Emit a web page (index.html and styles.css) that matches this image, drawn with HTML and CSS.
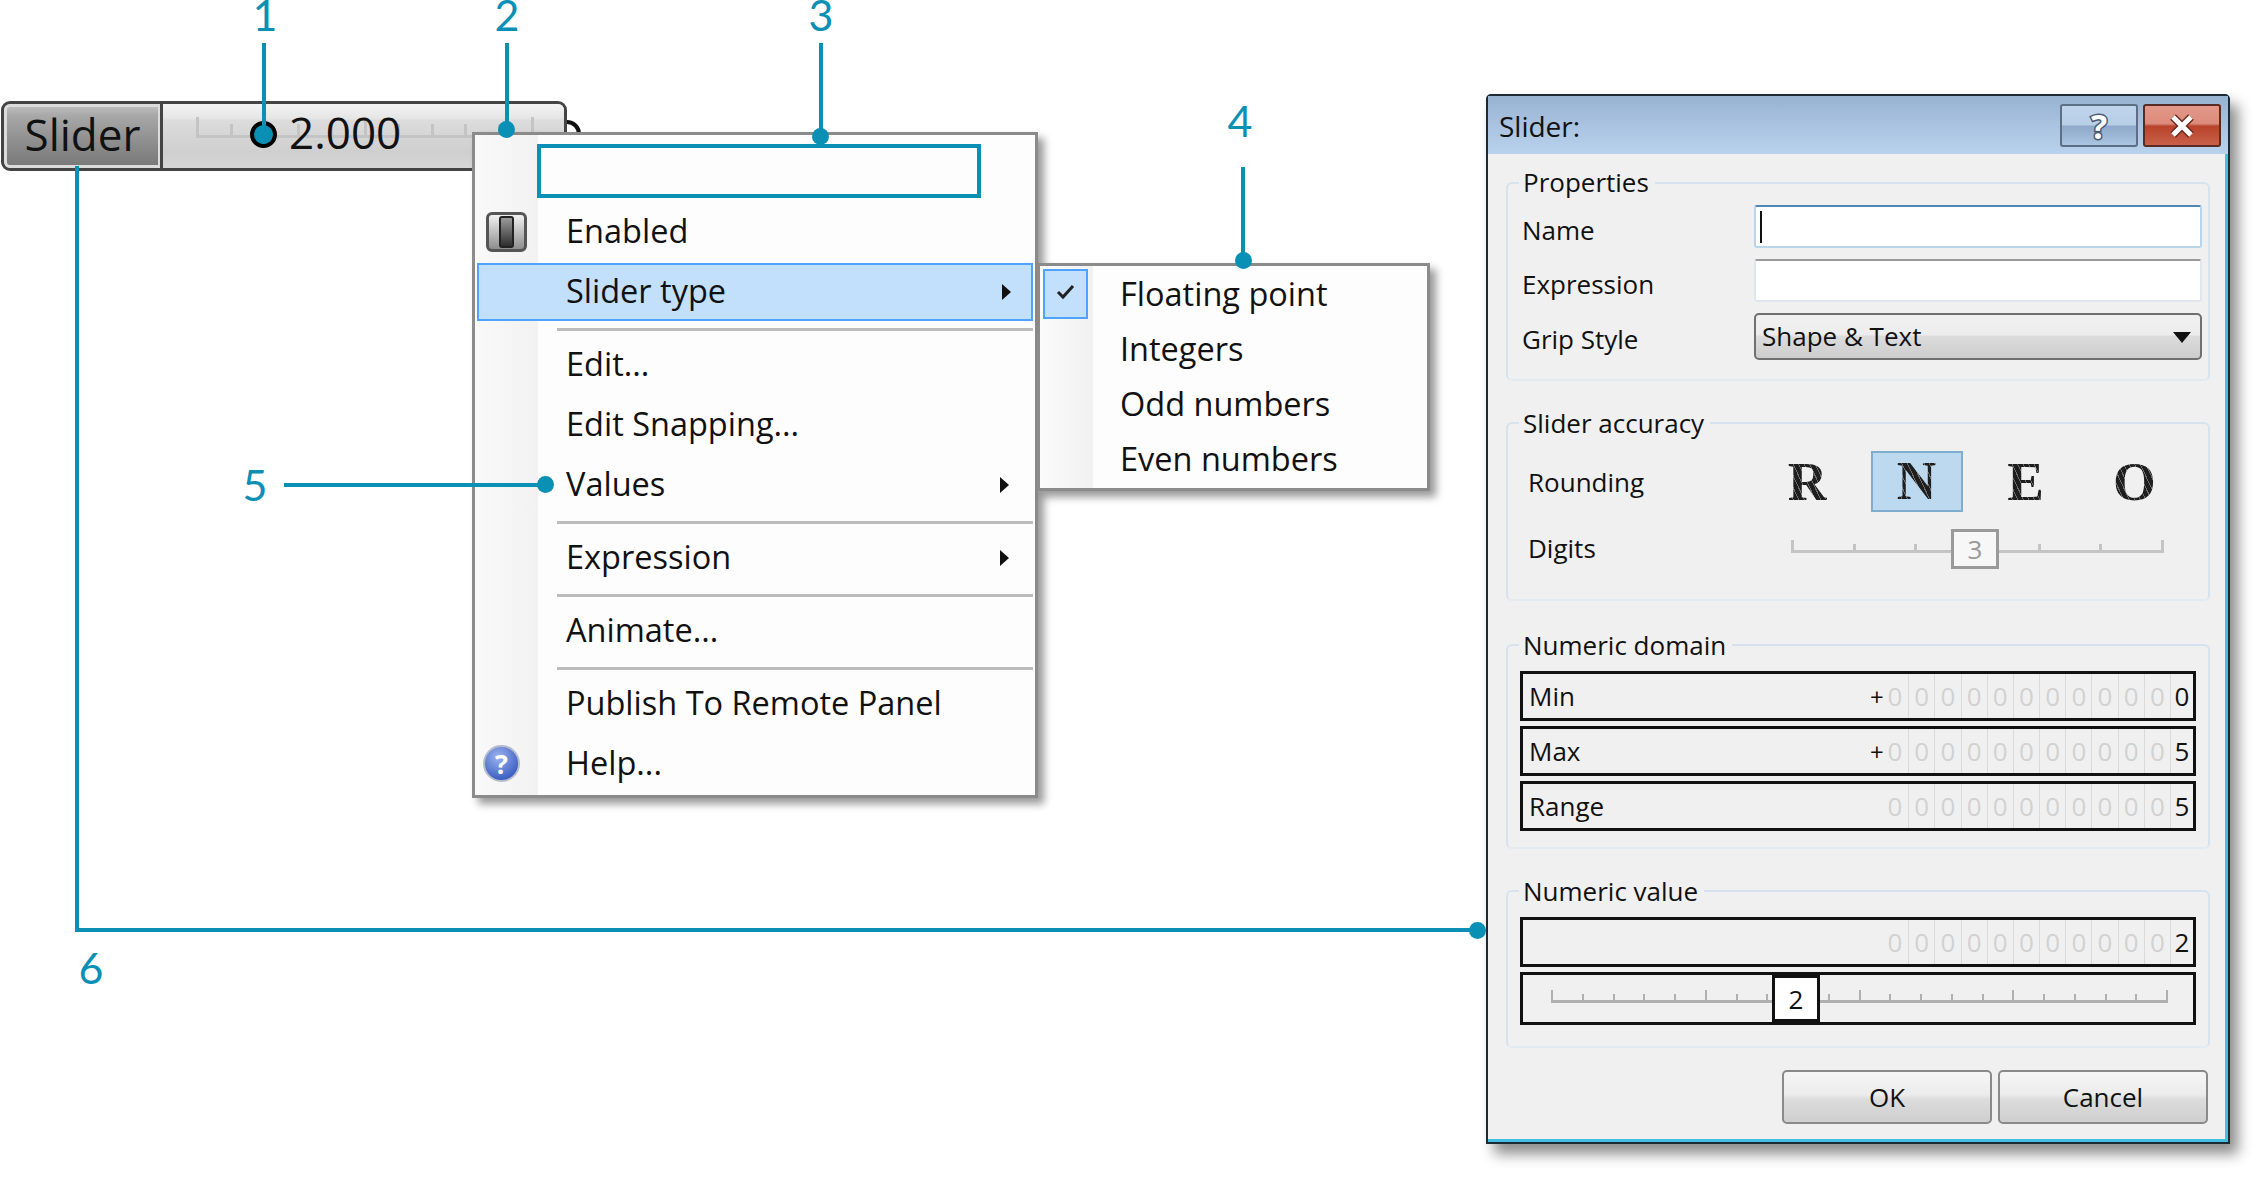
FILE: index.html
```html
<!DOCTYPE html>
<html lang="en">
<head>
    <meta charset="UTF-8">
    <title>Slider</title>
    <link rel="stylesheet" href="styles.css">
</head>
<body>
<div class="canvas">

    <!-- slider component -->
    <div class="wire-ring"></div>
    <div class="slider-node">
        <div class="node-label">Slider</div>
        <div class="node-body">
            <div class="ticks node-ticks">
                <i class="big"></i><i></i><i></i><i></i><i></i><i class="big"></i><i></i><i></i><i></i><i></i><i class="big"></i>
            </div>
            <div class="node-grip"></div>
            <div class="node-value">2.000</div>
        </div>
    </div>

    <!-- context menu -->
    <div class="menu">
        <div class="menu-blank"></div>
        <div class="menu-item">
            <span class="enabled-icon"><span></span></span>
            Enabled
        </div>
        <div class="menu-item active">Slider type<span class="arrow"></span></div>
        <div class="menu-sep"></div>
        <div class="menu-item">Edit...</div>
        <div class="menu-item">Edit Snapping...</div>
        <div class="menu-item">Values<span class="arrow"></span></div>
        <div class="menu-sep"></div>
        <div class="menu-item">Expression<span class="arrow"></span></div>
        <div class="menu-sep"></div>
        <div class="menu-item">Animate...</div>
        <div class="menu-sep"></div>
        <div class="menu-item">Publish To Remote Panel</div>
        <div class="menu-item"><span class="help-icon">?</span>Help...</div>
    </div>

    <div class="submenu">
        <div class="sub-item">
            <span class="sub-check">
                <svg width="20" height="16" viewBox="0 0 20 16"><path d="M2 8 L7 13 L17 2" fill="none" stroke="#222" stroke-width="3"/></svg>
            </span>
            Floating point
        </div>
        <div class="sub-item"><span class="sub-check off"></span>Integers</div>
        <div class="sub-item"><span class="sub-check off"></span>Odd numbers</div>
        <div class="sub-item"><span class="sub-check off"></span>Even numbers</div>
    </div>

    <!-- dialog -->
    <div class="dialog">
        <div class="titlebar">
            <span class="title">Slider:</span>
            <span class="title-btn btn-help">?</span>
            <span class="title-btn btn-close">
                <svg width="30" height="26" viewBox="0 0 30 26"><path d="M6 4 L24 22 M24 4 L6 22" stroke="#6b2a1e" stroke-width="8"/><path d="M6 4 L24 22 M24 4 L6 22" stroke="#fff" stroke-width="5"/></svg>
            </span>
        </div>
        <div class="dialog-body">

            <div class="group group-props">
                <span class="legend">Properties</span>
                <div class="prop-grid">
                    <span class="prop-label">Name</span>
                    <div class="input focused"><span class="caret"></span></div>
                    <span class="prop-label">Expression</span>
                    <div class="input"></div>
                    <span class="prop-label grip">Grip Style</span>
                    <div class="select">Shape &amp; Text<span class="select-arrow"></span></div>
                </div>
            </div>

            <div class="group group-accuracy">
                <span class="legend">Slider accuracy</span>
                <div class="acc-row rounding">
                    <span class="acc-label">Rounding</span>
                    <div class="round-cell"><span class="glyph">R</span></div>
                    <div class="round-cell"><span class="selected"><span class="glyph">N</span></span></div>
                    <div class="round-cell"><span class="glyph">E</span></div>
                    <div class="round-cell"><span class="glyph">O</span></div>
                </div>
                <div class="acc-row digits">
                    <span class="acc-label">Digits</span>
                    <div class="digits-slider">
                        <div class="ticks digits-ticks">
                            <i class="big"></i><i></i><i></i><i></i><i></i><i></i><i class="big"></i>
                        </div>
                        <div class="digits-grip">3</div>
                    </div>
                </div>
            </div>

            <div class="group group-domain">
                <span class="legend">Numeric domain</span>
                <div class="num-field">
                    <span class="num-label">Min</span><span class="plus">+</span>
                    <div class="num-digits"><b>0</b><b>0</b><b>0</b><b>0</b><b>0</b><b>0</b><b>0</b><b>0</b><b>0</b><b>0</b><b>0</b><b class="on">0</b></div>
                </div>
                <div class="num-field">
                    <span class="num-label">Max</span><span class="plus">+</span>
                    <div class="num-digits"><b>0</b><b>0</b><b>0</b><b>0</b><b>0</b><b>0</b><b>0</b><b>0</b><b>0</b><b>0</b><b>0</b><b class="on">5</b></div>
                </div>
                <div class="num-field">
                    <span class="num-label">Range</span>
                    <div class="num-digits"><b>0</b><b>0</b><b>0</b><b>0</b><b>0</b><b>0</b><b>0</b><b>0</b><b>0</b><b>0</b><b>0</b><b class="on">5</b></div>
                </div>
            </div>

            <div class="group group-value">
                <span class="legend">Numeric value</span>
                <div class="num-field">
                    <span class="num-label"></span>
                    <div class="num-digits"><b>0</b><b>0</b><b>0</b><b>0</b><b>0</b><b>0</b><b>0</b><b>0</b><b>0</b><b>0</b><b>0</b><b class="on">2</b></div>
                </div>
                <div class="value-slider">
                    <div class="ticks value-ticks">
                        <i class="big"></i><i></i><i></i><i></i><i></i><i class="big"></i><i></i><i></i><i></i><i></i><i class="big"></i><i></i><i></i><i></i><i></i><i class="big"></i><i></i><i></i><i></i><i></i><i class="big"></i>
                    </div>
                    <div class="value-grip">2</div>
                </div>
            </div>

            <div class="dialog-buttons">
                <span class="push-btn">OK</span>
                <span class="push-btn">Cancel</span>
            </div>
        </div>
    </div>

    <!-- callouts -->
    <div class="box-3"></div>

    <div class="line line-1"></div>
    <div class="line line-2"></div>
    <div class="line line-3"></div>
    <div class="line line-4"></div>
    <div class="line line-5"></div>
    <div class="line line-6a"></div>
    <div class="line line-6b"></div>

    <div class="dot dot-1"></div>
    <div class="dot dot-2"></div>
    <div class="dot dot-3"></div>
    <div class="dot dot-4"></div>
    <div class="dot dot-5"></div>
    <div class="dot dot-6"></div>

    <div class="num num-1">1</div>
    <div class="num num-2">2</div>
    <div class="num num-3">3</div>
    <div class="num num-4">4</div>
    <div class="num num-5">5</div>
    <div class="num num-6">6</div>
</div>
</body>
</html>
```

FILE: styles.css
```css
* {
    box-sizing: border-box;
}

body {
    margin: 0;
    background: #fff;
    font-family: "Open Sans", "Noto Sans", sans-serif;
    color: #111;
}

.canvas {
    position: relative;
    width: 2262px;
    height: 1177px;
    overflow: hidden;
}

/* ticks, shared by all the little rulers */
.ticks {
    display: flex;
    justify-content: space-between;
    align-items: flex-end;
    border-bottom: 3px solid #c4c4c4;
}

.ticks i {
    display: block;
    width: 3px;
    height: 60%;
    background: #c4c4c4;
}

.ticks i.big {
    height: 100%;
}

/* slider component */
.wire-ring {
    position: absolute;
    left: 553px;
    top: 120px;
    width: 28px;
    height: 28px;
    border: 4px solid #111;
    border-radius: 50%;
}

.slider-node {
    position: absolute;
    left: 1px;
    top: 101px;
    width: 566px;
    height: 70px;
    display: flex;
    border: 3px solid #444;
    border-radius: 9px;
    overflow: hidden;
    background: #ddd;
}

.node-label {
    width: 156px;
    display: flex;
    align-items: center;
    justify-content: center;
    padding-bottom: 5px;
    border: 3px solid #dcdcdc;
    border-right-width: 2px;
    border-radius: 6px 0 0 6px;
    background: linear-gradient(#bcbcbc 0, #a8a8a8 15%, #8e8e8e 60%, #7a7a7a 100%);
    font-size: 44px;
    color: #111;
}

.node-body {
    position: relative;
    flex: 1;
    border-left: 3px solid #444;
    background: linear-gradient(#f3f3f3 0, #e6e6e6 22%, #dcdcdc 26%, #cfcfcf 75%, #d6d6d6 100%);
}

.node-ticks {
    position: absolute;
    left: 33px;
    top: 13px;
    width: 338px;
    height: 21px;
}

.node-grip {
    position: absolute;
    left: 87px;
    top: 17px;
    width: 27px;
    height: 27px;
    border: 4px solid #000;
    border-radius: 50%;
    background: #0a8fb5;
}

.node-value {
    position: absolute;
    left: 126px;
    top: -2px;
    height: 60px;
    line-height: 60px;
    font-size: 44px;
}

/* context menu */
.menu, .submenu {
    position: absolute;
    border: 3px solid #8b8b8b;
    font-size: 32.5px;
    box-shadow: 6px 6px 8px rgba(0, 0, 0, 0.4);
}

.menu {
    left: 472px;
    top: 132px;
    width: 566px;
    height: 666px;
    background: linear-gradient(to right, #f9f9f9 0, #f2f2f2 63px, #fdfdfd 63px);
}

.menu-blank {
    height: 67px;
}

.menu-item {
    position: relative;
    display: flex;
    align-items: center;
    height: 60px;
    margin: 0 2px;
    padding: 0 0 3px 89px;
}

.menu-item.active {
    height: 58px;
    margin-top: 1px;
    margin-bottom: 1px;
    background: #c2dffc;
    border: 2px solid #4da3ff;
    padding-left: 87px;
}

.menu-sep {
    height: 13px;
    padding-top: 6px;
    margin-left: 82px;
}

.menu-sep::before {
    content: "";
    display: block;
    height: 3px;
    margin-right: 2px;
    background: #bcbcbc;
}

.arrow {
    position: absolute;
    left: 523px;
    top: 50%;
    margin-top: -8px;
    border-left: 9px solid #111;
    border-top: 8px solid transparent;
    border-bottom: 8px solid transparent;
}

.enabled-icon {
    position: absolute;
    left: 9px;
    top: 10px;
    width: 41px;
    height: 40px;
    display: flex;
    justify-content: center;
    align-items: center;
    border: 3px solid #555;
    border-radius: 6px;
    background: linear-gradient(#f2f2f2 0, #c4c4c4 45%, #8e8e8e 100%);
}

.enabled-icon span {
    width: 15px;
    height: 32px;
    border: 2px solid #222;
    border-radius: 3px;
    background: linear-gradient(#9a9a9a, #2f2f2f);
}

.help-icon {
    position: absolute;
    left: 6px;
    top: 11px;
    width: 37px;
    height: 37px;
    display: flex;
    justify-content: center;
    align-items: center;
    border: 2px solid #b5bbcc;
    border-radius: 50%;
    background: radial-gradient(circle at 40% 30%, #9db4ef, #3d5fc2 75%);
    color: #fff;
    font-size: 27px;
    font-weight: 700;
}

/* submenu */
.submenu {
    left: 1037px;
    top: 263px;
    width: 393px;
    height: 228px;
    background: linear-gradient(to right, #fbfbfb 0, #f1f1f1 53px, #fdfdfd 53px);
}

.sub-item {
    display: flex;
    align-items: center;
    height: 55px;
}

.sub-check {
    width: 45px;
    height: 50px;
    margin: 0 32px 0 3px;
    display: flex;
    justify-content: center;
    padding-top: 13px;
    border: 2px solid #4da3ff;
    background: #c2dffc;
}

.sub-check.off {
    border: 0;
    background: none;
}

/* dialog */
.dialog {
    position: absolute;
    left: 1486px;
    top: 94px;
    width: 744px;
    height: 1050px;
    border: 2px solid #1d2a33;
    border-radius: 5px 5px 0 0;
    background: #f0f0f0;
    box-shadow: inset -3px -3px 0 #44bfe4, 8px 10px 14px rgba(0, 0, 0, 0.45);
    font-size: 26px;
}

.titlebar {
    display: flex;
    height: 58px;
    padding: 8px 7px 0 11px;
    gap: 5px;
    background: linear-gradient(#98b2d2, #b9d3ee);
}

.title {
    flex: 1;
    font-size: 28px;
    line-height: 44px;
}

.title-btn {
    width: 78px;
    height: 43px;
    display: flex;
    justify-content: center;
    align-items: center;
    border-radius: 3px;
}

.btn-help {
    border: 2px solid #5d6f85;
    background: linear-gradient(#c0d4ec 0, #b8cfe8 48%, #8fa9c8 52%, #a9c5e2 100%);
    color: #fff;
    font-size: 34px;
    font-weight: 700;
    -webkit-text-stroke: 3px #4a5a70;
    paint-order: stroke fill;
}

.btn-close {
    border: 2px solid #5a2a24;
    background: linear-gradient(#e2988a 0, #dd8b7b 45%, #b8432a 52%, #c9604a 100%);
}

.dialog-body {
    display: flex;
    flex-direction: column;
    gap: 41px;
    padding: 28px 18px 0;
}

.group {
    position: relative;
    border: 2px solid #d6e2ee;
    border-bottom-color: #e2eaf2;
    border-radius: 6px;
}

.legend {
    position: absolute;
    left: 11px;
    top: -19px;
    padding: 0 6px 0 4px;
    line-height: 36px;
    background: #f0f0f0;
}

/* properties */
.group-props {
    padding: 21px 6px 19px 14px;
}

.group-props .legend {
    top: -20px;
}

.prop-grid {
    display: grid;
    grid-template-columns: 232px 448px;
    grid-template-rows: 43px 43px 47px;
    row-gap: 11px;
    align-items: center;
}

.prop-label {
    padding-top: 6px;
}

.prop-label.grip {
    padding-top: 4px;
}

.input {
    height: 43px;
    padding: 4px;
    border: 2px solid #e1e6ec;
    border-top-color: #9a9a9a;
    border-radius: 3px;
    background: #fff;
}

.input.focused {
    border-color: #b9d5ea;
    border-top-color: #4f88b8;
}

.caret {
    display: block;
    width: 2px;
    height: 32px;
    background: #111;
}

.select {
    position: relative;
    height: 47px;
    padding-left: 6px;
    line-height: 42px;
    border: 2px solid #707070;
    border-radius: 5px;
    background: linear-gradient(#f0f0f0 0, #ededed 45%, #dcdcdc 50%, #cdcdcd 100%);
}

.select-arrow {
    position: absolute;
    right: 9px;
    top: 17px;
    border-top: 11px solid #111;
    border-left: 9px solid transparent;
    border-right: 9px solid transparent;
}

/* accuracy */
.group-accuracy {
    margin-bottom: 2px;
    padding: 27px 0 31px 20px;
}

.acc-row {
    display: flex;
    align-items: center;
}

.rounding {
    height: 61px;
}

.digits {
    height: 40px;
    margin-top: 16px;
}

.acc-label {
    width: 225px;
}

.round-cell {
    width: 109px;
    display: flex;
    justify-content: center;
    font-family: "Liberation Serif", serif;
    font-size: 55px;
    font-weight: 700;
    line-height: 59px;
}

/* engraved look of the letters */
.glyph {
    color: transparent;
    background: repeating-linear-gradient(65deg, #1e1e1e 0, #1e1e1e 4px, #6a6a6a 4px, #6a6a6a 5px);
    -webkit-background-clip: text;
    background-clip: text;
}

.round-cell .selected {
    width: 92px;
    height: 61px;
    text-align: center;
    background: #bcd9f0;
    border: 2px solid #7eadd0;
    line-height: 55px;
}

.digits-slider {
    position: relative;
    margin-left: 38px;
    margin-top: -4px;
    width: 373px;
}

.digits-ticks {
    height: 13px;
}

.digits-grip {
    position: absolute;
    left: 160px;
    top: -11px;
    width: 48px;
    height: 40px;
    display: flex;
    justify-content: center;
    align-items: center;
    border: 3px solid #9a9a9a;
    background: #f7f7f7;
    color: #999;
}

/* numeric fields */
.group-domain {
    display: flex;
    flex-direction: column;
    gap: 5px;
    padding: 25px 12px 16px;
}

.group-value {
    display: flex;
    flex-direction: column;
    gap: 5px;
    padding: 25px 12px 21px;
}

.num-field {
    display: flex;
    align-items: center;
    height: 50px;
    border: 3px solid #111;
}

.num-label {
    flex: 1;
    padding-left: 6px;
}

.plus {
    width: 12px;
    font-size: 24px;
    text-align: center;
}

.num-digits {
    display: grid;
    grid-template-columns: repeat(11, 26.2px) 23px;
    height: 100%;
    font-size: 26px;
}

.num-digits b {
    display: flex;
    justify-content: center;
    align-items: center;
    font-weight: 400;
    color: #d2d2d2;
    border-left: 1px solid #dadada;
}

.num-digits b:first-child {
    border-left: 0;
}

.num-digits b.on {
    color: #111;
}

.value-slider {
    position: relative;
    height: 53px;
    padding: 15px 25px 0 28px;
    border: 3px solid #111;
}

.value-ticks {
    height: 13px;
    border-bottom-color: #b0b0b0;
}

.value-ticks i {
    width: 2px;
    background: #b0b0b0;
}

.value-grip {
    position: absolute;
    left: 249px;
    top: 0;
    width: 48px;
    height: 47px;
    display: flex;
    justify-content: center;
    align-items: center;
    border: 3px solid #111;
    background: #fff;
}

/* OK / Cancel */
.dialog-buttons {
    display: flex;
    justify-content: flex-end;
    gap: 6px;
    margin-top: -19px;
    margin-right: 2px;
}

.push-btn {
    width: 210px;
    height: 54px;
    display: flex;
    justify-content: center;
    align-items: center;
    border: 2px solid #8a8a8a;
    border-radius: 5px;
    background: linear-gradient(#f6f6f6 0, #ececec 45%, #dcdcdc 55%, #cfcfcf 100%);
}

/* callouts */
.box-3 {
    position: absolute;
    left: 537px;
    top: 144px;
    width: 444px;
    height: 54px;
    border: 4px solid #0a8fb5;
}

.line {
    position: absolute;
    background: #0a8fb5;
}

.line-1 { left: 262px; top: 43px; width: 4px; height: 92px; }
.line-2 { left: 505px; top: 43px; width: 4px; height: 86px; }
.line-3 { left: 819px; top: 43px; width: 4px; height: 93px; }
.line-4 { left: 1241px; top: 167px; width: 4px; height: 93px; }
.line-5 { left: 284px; top: 483px; width: 262px; height: 4px; }
.line-6a { left: 75px; top: 166px; width: 4px; height: 766px; }
.line-6b { left: 75px; top: 928px; width: 1402px; height: 4px; }

.dot {
    position: absolute;
    width: 17px;
    height: 17px;
    border-radius: 50%;
    background: #0a8fb5;
}

.dot-1 { left: 255px; top: 127px; }
.dot-2 { left: 498px; top: 121px; }
.dot-3 { left: 812px; top: 128px; }
.dot-4 { left: 1235px; top: 252px; }
.dot-5 { left: 537px; top: 476px; }
.dot-6 { left: 1469px; top: 922px; }

.num {
    position: absolute;
    width: 60px;
    text-align: center;
    font-family: "Lato", sans-serif;
    font-size: 43px;
    font-weight: 400;
    line-height: 28px;
    color: #0a8fb5;
}

.num-1 { left: 235px; top: 1px; }
.num-2 { left: 477px; top: 1px; }
.num-3 { left: 791px; top: 1px; }
.num-4 { left: 1210px; top: 107px; }
.num-5 { left: 225px; top: 471px; }
.num-6 { left: 61px; top: 954px; }
```
